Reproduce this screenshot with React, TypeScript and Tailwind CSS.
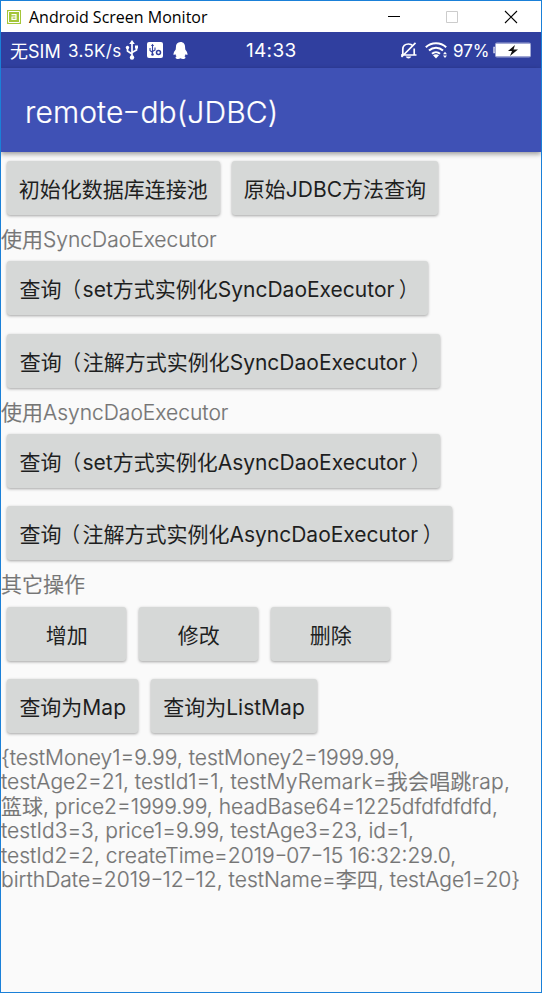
import type { ReactNode } from "react";

function ActionButton({ width, children }: { width: string; children: ReactNode }) {
  return (
    <button
      className={`${width} flex h-[54px] shrink-0 justify-center whitespace-nowrap rounded-[3px] bg-[#d6d8d7] text-[21px] font-normal leading-[57px] text-[#1e1f1f] shadow-[0_1px_3px_rgba(0,0,0,0.35)]`}
    >
      <span>{children}</span>
    </button>
  );
}

function Wrapped({ children }: { children: ReactNode }) {
  return (
    <>
      <span className="inline-block origin-center -translate-x-[1px] scale-x-90">（</span>
      {children}
      <span className="inline-block origin-center translate-x-[4px] scale-x-90">）</span>
    </>
  );
}

function Dash() {
  return <span className="inline-block origin-center -translate-y-[0.06em] scale-x-[1.3] px-[0.055em]">-</span>;
}

function ButtonRow({ children }: { children: ReactNode }) {
  return <div className="flex h-[72.2px] gap-[12.6px] pl-[6px] pt-[9px]">{children}</div>;
}

function SectionLabel({ children }: { children: ReactNode }) {
  return (
    <div className="h-[28.2px] whitespace-nowrap text-[21px] font-[350] leading-[32px] text-[#757575] [-webkit-text-stroke:0.2px_#757575]">
      {children}
    </div>
  );
}

function TitleBar() {
  return (
    <header className="flex h-[31px] items-center bg-white">
      <svg className="ml-[6px] h-[14px] w-[14px]" viewBox="0 0 14 14" fill="none">
        <rect width="14" height="14" fill="#a4c639" />
        <path d="M1.5 1.5h11v11h-11z" stroke="#fff" />
        <path d="M4.5 4.6H9V9.4H5V7H9" stroke="#fff" strokeWidth="1.2" />
      </svg>
      <h1 className="ml-[8px] font-['Open_Sans','Noto_Sans_CJK_SC',sans-serif] text-[16px] leading-[30px] text-black">
        Android Screen Monitor
      </h1>
      <svg className="ml-auto mr-[23px] h-[14px] w-[131px]" viewBox="0 0 131 14" fill="none">
        <path d="M1 6.5h12" stroke="#000" />
        <path d="M59.5 1.5h11v11h-11z" stroke="#ccc" />
        <path d="M118 1l12 12M130 1l-12 12" stroke="#000" strokeWidth="1.1" />
      </svg>
    </header>
  );
}

function StatusBar() {
  return (
    <div className="grid h-[36px] grid-cols-[245px_60px_1fr] items-center bg-[#303f9f] pt-[2px] text-[18px] text-white">
      <div className="flex items-center">
        <span className="ml-[9px] w-[58px] whitespace-nowrap">无SIM</span>
        <span className="w-[57px] whitespace-nowrap pt-[1px] text-[17px] tracking-[0.3px]">3.5K/s</span>
        <svg className="-mt-[2px] h-[20px] w-[14px]" viewBox="0 0 14 20" fill="none" stroke="#fff" strokeWidth="1.7">
          <path d="M7 3v14M2.5 8v3L7 14M11.5 7v3L7 12.5" />
          <path d="M7 0l2.8 4H4.2zM10 5.5h3v3h-3z" fill="#fff" stroke="none" />
          <circle cx="2.5" cy="7.5" r="1.7" fill="#fff" stroke="none" />
          <circle cx="7" cy="17.5" r="2.2" fill="#fff" stroke="none" />
        </svg>
        <svg className="-mt-[2px] ml-[8px] h-[16px] w-[16px]" viewBox="0 0 16 16" fill="none">
          <rect width="16" height="16" rx="2" fill="#fff" />
          <g stroke="#303f9f" strokeWidth="1.1">
            <path d="M5.5 3v9M3 6v2.5l2.5 2M8 5.5v2.5l-2.5 1.5" />
            <circle cx="11.5" cy="10.5" r="2" strokeWidth="1.5" />
          </g>
          <path d="M5.5 1.8l1.6 2.2H3.9z" fill="#303f9f" />
          <circle cx="5.5" cy="12.5" r="1.3" fill="#303f9f" />
        </svg>
        <svg className="-mt-[2px] ml-[10px] h-[17px] w-[15px]" viewBox="0 0 15 17" fill="#fff">
          <path d="M7.5 0C4.3 0 2.8 2.3 2.9 5.5L2.7 7.5C1.3 9.2.2 11.2.6 12.7c.2.7.8.4 1.6-.7.2.9.7 1.7 1.4 2.3-1.3.6-1.5 2-.1 2.4 1.4.4 3.1.2 4-.5.9.7 2.6.9 4 .5 1.4-.4 1.2-1.8-.1-2.4.7-.6 1.2-1.4 1.4-2.3.8 1.1 1.4 1.4 1.6.7.4-1.5-.7-3.5-2.100-5.200l-.2-2C12.200 2.300 10.700 0 7.500 0z" />
        </svg>
      </div>
      <time className="whitespace-nowrap pt-[1px] text-[19px] tracking-[0.3px]">14:33</time>
      <div className="flex items-center">
        <svg className="-mt-[2px] ml-[94px] h-[17px] w-[17px]" viewBox="0 0 17 17" fill="none" stroke="#fff" strokeWidth="1.7">
          <path d="M2.8 12.5V7.5C2.8 4 5 2 8.5 2c2 0 3.5.8 4.5 2M14.2 6.5v6M1 13h15.5M15.5.8L1.5 15" />
          <path d="M5.7 14.5h5.6c-.6 1.3-1.5 2-2.8 2s-2.2-.7-2.8-2z" fill="#fff" stroke="none" />
        </svg>
        <svg className="-mt-[2px] ml-[8px] h-[17px] w-[23px]" viewBox="0 0 23 17" fill="none" stroke="#fff" strokeWidth="2">
          <path d="M.8 5.2C6.5-.2 15.5-.2 21.2 5.2M4 8.6c4-3.7 10-3.7 14 0M7 11.8c2.3-2.2 5.7-2.2 8 0" />
          <path d="M8 13.3c1.8-1.5 4.2-1.5 6 0l-3 3.2z" fill="#fff" stroke="none" />
          <path d="M18 12.2l2-2.5 2 2.5zM18 13.5l2 2.5 2-2.5z" fill="#fff" stroke="none" />
        </svg>
        <span className="ml-[5px] w-[38px] whitespace-nowrap pt-[1px] text-[17px]">97%</span>
        <svg className="-mt-[2px] ml-[2px] h-[16px] w-[38px]" viewBox="0 0 38 16">
          <path d="M2 5.5H1v5h1" fill="none" stroke="#c5c9e5" strokeWidth="1.6" />
          <rect x="2" y=".5" width="36" height="15" rx="2" fill="#a2a9d5" />
          <rect x="3.5" y="2.5" width="33" height="11" fill="#fff" stroke="#fff" />
          <path d="M22 3l-7 6h4l-2 5 8-6.5h-4.5z" fill="#111" />
        </svg>
      </div>
    </div>
  );
}

export default function App() {
  return (
    <div className="flex h-[993px] w-[542px] flex-col overflow-hidden border border-[#1a80d8] bg-[#fafafa] font-['Inter','Noto_Sans_CJK_SC',sans-serif]">
      <TitleBar />
      <StatusBar />
      <div className="z-10 flex h-[84px] shrink-0 items-center bg-[#3f51b5] pl-[24px] pt-[4px] text-[30px] font-[350] tracking-[0.12px] text-white shadow-[0_2px_5px_rgba(0,0,0,0.4)] [-webkit-text-stroke:0.2px_#fff]">
        <h2>remote<Dash />db(JDBC)</h2>
      </div>
      <main className="flex flex-col">
        <ButtonRow>
          <ActionButton width="w-[212.6px]">初始化数据库连接池</ActionButton>
          <ActionButton width="w-[205.6px]">原始JDBC方法查询</ActionButton>
        </ButtonRow>
        <SectionLabel>使用SyncDaoExecutor</SectionLabel>
        <ButtonRow>
          <ActionButton width="w-[421px]">查询<Wrapped>set方式实例化SyncDaoExecutor</Wrapped></ActionButton>
        </ButtonRow>
        <ButtonRow>
          <ActionButton width="w-[433px]">查询<Wrapped>注解方式实例化SyncDaoExecutor</Wrapped></ActionButton>
        </ButtonRow>
        <SectionLabel>使用AsyncDaoExecutor</SectionLabel>
        <ButtonRow>
          <ActionButton width="w-[433px]">查询<Wrapped>set方式实例化AsyncDaoExecutor</Wrapped></ActionButton>
        </ButtonRow>
        <ButtonRow>
          <ActionButton width="w-[444.6px]">查询<Wrapped>注解方式实例化AsyncDaoExecutor</Wrapped></ActionButton>
        </ButtonRow>
        <SectionLabel>其它操作</SectionLabel>
        <ButtonRow>
          <ActionButton width="w-[119.4px]">增加</ActionButton>
          <ActionButton width="w-[119.4px]">修改</ActionButton>
          <ActionButton width="w-[119.4px]">删除</ActionButton>
        </ButtonRow>
        <ButtonRow>
          <ActionButton width="w-[131.4px]">查询为Map</ActionButton>
          <ActionButton width="w-[166px]">查询为ListMap</ActionButton>
        </ButtonRow>
        <div className="whitespace-nowrap pt-[4px] text-[21px] font-[350] leading-[24.5px] text-[#757575] [-webkit-text-stroke:0.2px_#757575]">
          <p>{"{testMoney1=9.99, testMoney2=1999.99,"}</p>
          <p>testAge2=21, testId1=1, <span className="tracking-[0.2px]">testMyRemark=我会唱跳rap,</span></p>
          <p>篮球, price2=1999.99, headBase64=1225dfdfdfdfd,</p>
          <p className="tracking-[0.02px]">testId3=3, price1=9.99, testAge3=23, id=1,</p>
          <p>testId2=2, createTime=2019<Dash />07<Dash />15 16:32:29.0,</p>
          <p className="tracking-[0.02px]">birthDate=2019<Dash />12<Dash />12, testName=李四, testAge1=20{"}"}</p>
        </div>
      </main>
    </div>
  );
}
